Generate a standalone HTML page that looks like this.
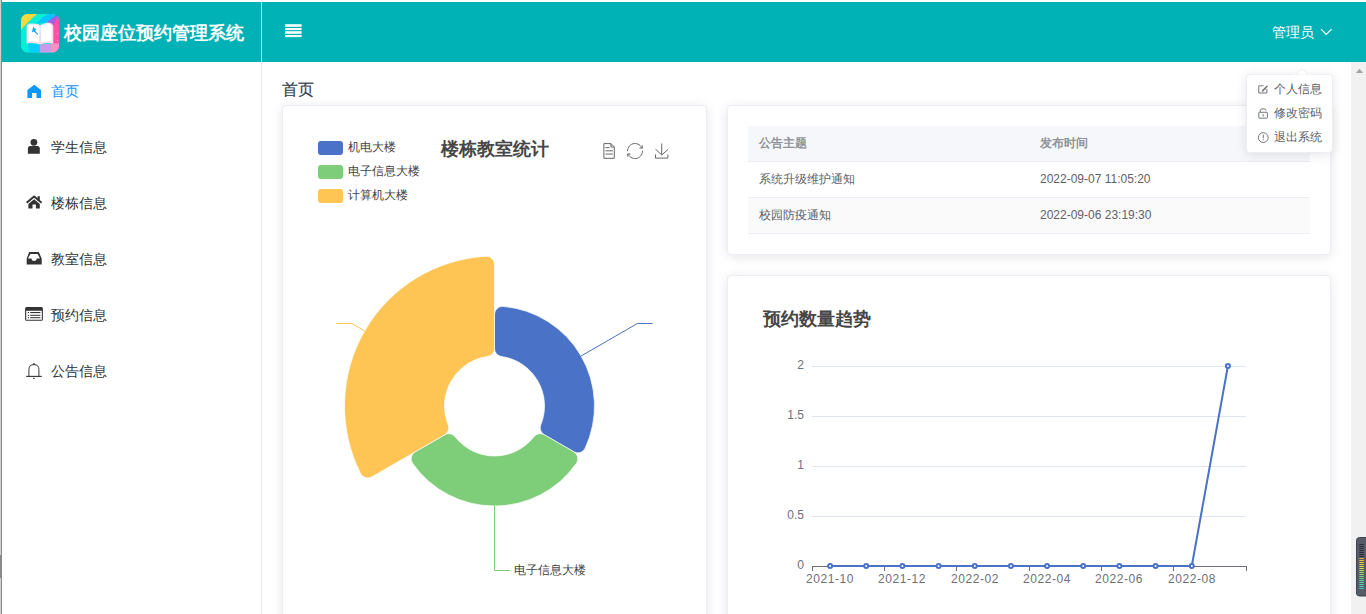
<!DOCTYPE html>
<html><head><meta charset="utf-8">
<style>
*{box-sizing:border-box;margin:0;padding:0}
html,body{width:1366px;height:614px;overflow:hidden;background:#fff;font-family:"Liberation Sans",sans-serif;position:relative}
.abs{position:absolute}
#topline{left:0;top:0;width:1366px;height:2px;background:#fff}
#leftline{left:0;top:0;width:2px;height:614px;background:#8a8a8a;border-left:1px solid #cfcfcf}
#header{left:2px;top:2px;width:1364px;height:60px;background:#00b2b5}
#hdiv{left:261px;top:2px;width:1px;height:60px;background:#dcdcdc}
#title{left:63.5px;top:21px;font-size:18px;font-weight:bold;color:#fff;line-height:24px;white-space:nowrap}
#sidebar{left:2px;top:62px;width:260px;height:552px;background:#fff;border-right:1px solid #e6e6e6}
.mi{position:absolute;left:51px;font-size:14px;color:#303133;line-height:20px;white-space:nowrap}
.ic{position:absolute}
#scroll{left:1351px;top:62px;width:15px;height:552px;background:#f1f1f1}
.card{position:absolute;background:#fff;border:1px solid #ebeef5;border-radius:4px;box-shadow:0 2px 12px 0 rgba(0,0,0,.1)}
.lg{position:absolute;font-size:12px;color:#444;line-height:14px;white-space:nowrap}
.sw{position:absolute;width:25px;height:14px;border-radius:3px;margin-top:1px}
table{border-collapse:collapse}
.th,.td{position:absolute;font-size:12px;line-height:16px;white-space:nowrap}
.th{color:#909399;font-weight:bold}
.td{color:#606266}
.ax{position:absolute;font-size:12px;color:#6e7079;line-height:14px;white-space:nowrap;letter-spacing:0.55px}
</style></head><body>
<div class="abs" id="topline"></div>
<div class="abs" id="header"></div>
<div class="abs" id="hdiv"></div>
<div class="abs" id="leftline"></div>
<!-- logo -->
<svg class="abs" style="left:21px;top:13.5px" width="38" height="39" viewBox="0 0 38 39">
  <defs><clipPath id="lc"><rect x="0" y="0" width="38" height="38.5" rx="6.5"/></clipPath></defs>
  <g clip-path="url(#lc)">
    <rect width="38" height="39" fill="#06eed6"/>
    <path d="M0 0H16Q7.6 7.2 0 15.5Z" fill="#ffd83c"/>
    <path d="M27 0H38V14L31.2 11L26.2 8.6L15.4 9.7Q21 3 27 0Z" fill="#06c4fc"/>
    <path d="M34.4 0H38V14L31.2 11L26.2 8.6Q30 4.5 34.4 1.5Z" fill="#a95ce6"/>
    <path d="M36.8 3.9L38 3V39H32V11Z" fill="#ff4fa6"/>
    <path d="M7 29.4L8.4 39H18.9V30.4Z" fill="#06cdfc"/>
    <path d="M18.9 30.4V39H30.1L29.4 29.4Z" fill="#c99ae8"/>
    <path d="M29.4 29.4L30.1 39H38V29Z" fill="#ff8fc6"/>
    <path d="M5.6 11.8Q6.5 9.4 9.25 9.4L15.4 9.7Q17.5 10 19 11.2V30.4Q12 28.5 5.6 29.4Z" fill="#ffdde9"/>
    <path d="M32.3 11.8Q31 8.8 28.3 8.8L26.8 8.6Q22 9.6 19 11.2V30.4Q26 28.5 32.3 29.4Z" fill="#ffdde9"/>
    <path d="M7.6 11.8Q8.2 10.4 10 10.4L15.2 10.7Q17 11 18.4 12V28.4Q12 27 7.6 27.5Z" fill="#fff"/>
    <path d="M30.6 11.8Q30 9.9 28 9.9L26.8 9.7Q22.5 10.6 19.6 12V28.4Q26 27 30.6 27.5Z" fill="#fff"/>
    <rect x="18.6" y="11.5" width="1" height="9" fill="#bfeaff"/>
    <rect x="18.6" y="20.5" width="1" height="9.5" fill="#e2cdf5"/>
    <path d="M12.2 12.6L13.4 14.6L15.6 14.8L14.2 16.4L14.6 18.6L12.6 17.6L10.8 18.4L11.4 16.2Z" fill="#18a4f4"/>
    <path d="M13.8 16.8L17.2 20L16.4 20.8L13 17.6Z" fill="#18a4f4"/>
    <circle cx="36.6" cy="19.3" r="0.5" fill="#ffd0e8"/>
    <circle cx="36.6" cy="26.6" r="0.5" fill="#ffd0e8"/>
  </g>
</svg>
<div class="abs" style="left:0;top:555px;width:1px;height:23px;background:#8a8a8a"></div>
<div class="abs" id="title">校园座位预约管理系统</div>
<!-- hamburger -->
<svg class="abs" style="left:0;top:0" width="320" height="62">
  <rect x="285" y="24.2" width="16.6" height="2.6" fill="#fff"/>
  <rect x="285" y="28" width="16.6" height="2.1" fill="#fff"/>
  <rect x="285" y="31.2" width="16.6" height="2.6" fill="#fff"/>
  <rect x="285" y="35" width="16.6" height="2.1" fill="#fff"/>
</svg>
<div class="abs" style="left:1272px;top:23px;font-size:14px;color:#fff;line-height:18px;white-space:nowrap">管理员</div>
<svg class="abs" style="left:1319px;top:26px" width="14" height="12" viewBox="0 0 14 12">
  <path d="M2 3.2L7.3 8.5L12.6 3.2" stroke="#fff" stroke-width="1.2" fill="none"/>
</svg>

<!-- sidebar -->
<div class="abs" id="sidebar">
</div>
<div class="mi" style="top:81px;color:#1890ff">首页</div>
<div class="mi" style="top:137px">学生信息</div>
<div class="mi" style="top:193px">楼栋信息</div>
<div class="mi" style="top:249px">教室信息</div>
<div class="mi" style="top:305px">预约信息</div>
<div class="mi" style="top:361px">公告信息</div>


<!-- sidebar icons -->
<svg class="abs" style="left:0;top:0" width="60" height="400">
  <path d="M34.2 84.7L41 90V98H36.5V93H32V98H27.4V90Z" fill="#0b99ff"/>
  <circle cx="33.9" cy="142.3" r="3.4" fill="#333"/>
  <path d="M27.9 153.7V148.5Q27.9 146 30.4 146H37.3Q39.8 146 39.8 148.5V153.7Z" fill="#333"/>
  <!-- fa-home -->
  <path d="M26.6 202.8L34.1 196.6L41.6 202.8" fill="none" stroke="#333" stroke-width="1.9" stroke-linejoin="miter"/>
  <rect x="37.5" y="196.2" width="2.3" height="4.5" fill="#333"/>
  <path d="M28.4 203.9L34.1 199.2L39.8 203.9V208.4H35.9V204.6H32.5V208.4H28.4Z" fill="#333"/>
  <!-- fa-inbox -->
  <path d="M29.2 252H38.8L41.7 258.5V264.6H26.7V258.5Z M30.4 254L27.9 258.5H31.2Q32 261 34.1 261Q36.2 261 37 258.5H40L37.6 254Z" fill="#333" fill-rule="evenodd"/>
  <!-- fa-list-alt -->
  <path d="M26.6 306.9H41.4Q42.9 306.9 42.9 308.4V319.25Q42.9 320.75 41.4 320.75H26.6Q25.1 320.75 25.1 319.25V308.4Q25.1 306.9 26.6 306.9Z M26.2 310.8V319.7H41.8V310.8Z" fill="#333" fill-rule="evenodd"/>
  <rect x="27.8" y="312" width="1.2" height="1.1" fill="#333"/>
  <rect x="27.8" y="314.8" width="1.2" height="1.1" fill="#333"/>
  <rect x="27.8" y="317.1" width="1.2" height="1.1" fill="#333"/>
  <rect x="30.2" y="312" width="10.2" height="1.1" fill="#333"/>
  <rect x="30.2" y="314.8" width="10.2" height="1.1" fill="#444"/>
  <rect x="30.2" y="317.1" width="10.2" height="1.1" fill="#444"/>
  <!-- bell -->
  <path d="M28.9 376.4V369.5Q28.9 364.6 33.9 364.6Q38.9 364.6 38.9 369.5V376.4" fill="none" stroke="#333" stroke-width="1"/>
  <path d="M26.2 376.4H41.8" stroke="#333" stroke-width="1.1"/>
  <circle cx="33.9" cy="363.9" r="0.9" fill="#333"/>
  <rect x="33" y="377.8" width="1.8" height="1" fill="#333"/>
</svg>

<!-- main title -->
<div class="abs" style="left:282px;top:79px;font-size:16px;color:#34404e;line-height:22px;white-space:nowrap;-webkit-text-stroke:0.2px #34404e">首页</div>

<!-- cards -->
<div class="card" style="left:282px;top:105px;width:425px;height:530px"></div>
<div class="card" style="left:727px;top:105px;width:604px;height:150px"></div>
<div class="card" style="left:727px;top:275px;width:604px;height:360px"></div>


<!-- pie card content -->
<div class="sw" style="left:318px;top:140px;background:#4a72c6"></div>
<div class="sw" style="left:318px;top:164px;background:#7ecd78"></div>
<div class="sw" style="left:318px;top:188px;background:#fec555"></div>
<div class="lg" style="left:348px;top:140px">机电大楼</div>
<div class="lg" style="left:348px;top:164px">电子信息大楼</div>
<div class="lg" style="left:348px;top:188px">计算机大楼</div>
<div class="abs" style="left:441px;top:137px;font-size:18px;font-weight:bold;color:#464646;line-height:24px;white-space:nowrap">楼栋教室统计</div>
<svg class="abs" style="left:0;top:0;overflow:visible" width="1366" height="614">
<path d="M494.50 348.55 L494.50 314.35 A8.00 8.00 0 0 1 503.20 306.38 A100.00 100.00 0 0 1 585.12 448.28 A8.00 8.00 0 0 1 573.87 451.83 L544.25 434.72 A8.00 8.00 0 0 1 540.84 424.79 A50.00 50.00 0 0 0 501.40 356.48 A8.00 8.00 0 0 1 494.50 348.55 Z" fill="#4a72c6" stroke="#fff" stroke-width="0.7"/>
<path d="M544.25 434.72 L573.87 451.83 A8.00 8.00 0 0 1 576.43 463.34 A100.00 100.00 0 0 1 412.57 463.34 A8.00 8.00 0 0 1 415.13 451.83 L444.75 434.72 A8.00 8.00 0 0 1 455.06 436.73 A50.00 50.00 0 0 0 533.94 436.73 A8.00 8.00 0 0 1 544.25 434.72 Z" fill="#7ecd78" stroke="#fff" stroke-width="0.7"/>
<path d="M444.75 434.72 L371.72 476.89 A8.00 8.00 0 0 1 360.58 473.56 A150.00 150.00 0 0 1 486.05 256.24 A8.00 8.00 0 0 1 494.50 264.23 L494.50 348.55 A8.00 8.00 0 0 1 487.60 356.48 A50.00 50.00 0 0 0 448.16 424.79 A8.00 8.00 0 0 1 444.75 434.72 Z" fill="#fec555" stroke="#fff" stroke-width="0.7"/>
<polyline points="581.1,356 637.4,323.5 652.5,323.5" fill="none" stroke="#4a72c6" stroke-width="1"/>
<polyline points="364.6,331 352,323.5 336.5,323.5" fill="none" stroke="#fec555" stroke-width="1"/>
<polyline points="494.5,506 494.5,570.5 510,570.5" fill="none" stroke="#7ecd78" stroke-width="1"/>
</svg>
<div class="lg" style="left:514px;top:563px">电子信息大楼</div>
<!-- toolbox -->
<svg class="abs" style="left:0;top:0" width="700" height="200">
 <g transform="translate(600.88,143.08) scale(0.2625)" fill="none" stroke="#666">
  <path vector-effect="non-scaling-stroke" d="M17.5,17.3H33 M45.4,29.5h-28 M11.5,2v56H51V14.8L38.4,2H11.5z M38.4,2.2v12.7H51 M45.4,41.7h-28"/>
 </g>
 <g transform="translate(626.96,142.99) scale(0.268)" fill="none" stroke="#666">
  <path vector-effect="non-scaling-stroke" d="M47,18.9h9.8V8.7 M56.3,20.1 C52.1,9,40.5,0.6,26.8,2.1C12.6,3.7,1.6,16.2,2.1,30.6 M13,41.1H3.1v10.2 M3.7,39.9c4.2,11.1,15.8,19.5,29.5,18 c14.2-1.6,25.2-14.1,24.7-28.5"/>
 </g>
 <g transform="translate(654.34,143.5) scale(0.2517)" fill="none" stroke="#666">
  <path vector-effect="non-scaling-stroke" d="M4.7,22.9L29.3,45.5L54.7,23.4M4.6,43.6L4.6,58L53.8,58L53.8,43.6M29.2,45.1L29.2,0"/>
 </g>
</svg>

<!-- table card -->
<div class="abs" style="left:748px;top:126px;width:562px;height:36px;background:#f5f7fa;border-bottom:1px solid #ebeef5"></div>
<div class="abs" style="left:748px;top:162px;width:562px;height:36px;background:#fff;border-bottom:1px solid #ebeef5"></div>
<div class="abs" style="left:748px;top:198px;width:562px;height:36px;background:#fafafa;border-bottom:1px solid #ebeef5"></div>
<div class="th" style="left:759px;top:135px">公告主题</div>
<div class="th" style="left:1040px;top:135px">发布时间</div>
<div class="td" style="left:759px;top:171px">系统升级维护通知</div>
<div class="td" style="left:1040px;top:171px">2022-09-07 11:05:20</div>
<div class="td" style="left:759px;top:207px">校园防疫通知</div>
<div class="td" style="left:1040px;top:207px">2022-09-06 23:19:30</div>

<!-- line chart -->
<div class="abs" style="left:763px;top:307px;font-size:18px;font-weight:bold;color:#464646;line-height:24px;white-space:nowrap">预约数量趋势</div>
<svg class="abs" style="left:0;top:0;overflow:visible" width="1366" height="614">
<line x1="812" y1="366.5" x2="1246" y2="366.5" stroke="#e0e6f1" stroke-width="1"/>
<line x1="812" y1="416.5" x2="1246" y2="416.5" stroke="#e0e6f1" stroke-width="1"/>
<line x1="812" y1="466.5" x2="1246" y2="466.5" stroke="#e0e6f1" stroke-width="1"/>
<line x1="812" y1="516.5" x2="1246" y2="516.5" stroke="#e0e6f1" stroke-width="1"/>
<line x1="812" y1="566.5" x2="1246" y2="566.5" stroke="#6e7079" stroke-width="1"/>
<line x1="812.5" y1="566" x2="812.5" y2="571" stroke="#6e7079" stroke-width="1"/>
<line x1="884.5" y1="566" x2="884.5" y2="571" stroke="#6e7079" stroke-width="1"/>
<line x1="956.5" y1="566" x2="956.5" y2="571" stroke="#6e7079" stroke-width="1"/>
<line x1="1029.5" y1="566" x2="1029.5" y2="571" stroke="#6e7079" stroke-width="1"/>
<line x1="1101.5" y1="566" x2="1101.5" y2="571" stroke="#6e7079" stroke-width="1"/>
<line x1="1173.5" y1="566" x2="1173.5" y2="571" stroke="#6e7079" stroke-width="1"/>
<line x1="1246.5" y1="566" x2="1246.5" y2="571" stroke="#6e7079" stroke-width="1"/>
<polyline points="830.1,566.0 866.2,566.0 902.4,566.0 938.6,566.0 974.8,566.0 1010.9,566.0 1047.1,566.0 1083.2,566.0 1119.4,566.0 1155.6,566.0 1191.8,566.0 1227.9,366.0" fill="none" stroke="#4a72c6" stroke-width="2" stroke-linejoin="round"/>
<circle cx="830.1" cy="566.0" r="2" fill="#fff" stroke="#4a72c6" stroke-width="2"/>
<circle cx="866.2" cy="566.0" r="2" fill="#fff" stroke="#4a72c6" stroke-width="2"/>
<circle cx="902.4" cy="566.0" r="2" fill="#fff" stroke="#4a72c6" stroke-width="2"/>
<circle cx="938.6" cy="566.0" r="2" fill="#fff" stroke="#4a72c6" stroke-width="2"/>
<circle cx="974.8" cy="566.0" r="2" fill="#fff" stroke="#4a72c6" stroke-width="2"/>
<circle cx="1010.9" cy="566.0" r="2" fill="#fff" stroke="#4a72c6" stroke-width="2"/>
<circle cx="1047.1" cy="566.0" r="2" fill="#fff" stroke="#4a72c6" stroke-width="2"/>
<circle cx="1083.2" cy="566.0" r="2" fill="#fff" stroke="#4a72c6" stroke-width="2"/>
<circle cx="1119.4" cy="566.0" r="2" fill="#fff" stroke="#4a72c6" stroke-width="2"/>
<circle cx="1155.6" cy="566.0" r="2" fill="#fff" stroke="#4a72c6" stroke-width="2"/>
<circle cx="1191.8" cy="566.0" r="2" fill="#fff" stroke="#4a72c6" stroke-width="2"/>
<circle cx="1227.9" cy="366.0" r="2" fill="#fff" stroke="#4a72c6" stroke-width="2"/>
</svg>
<div class="ax" style="letter-spacing:0;right:562px;top:358px">2</div>
<div class="ax" style="letter-spacing:0;right:562px;top:408px">1.5</div>
<div class="ax" style="letter-spacing:0;right:562px;top:458px">1</div>
<div class="ax" style="letter-spacing:0;right:562px;top:508px">0.5</div>
<div class="ax" style="letter-spacing:0;right:562px;top:558px">0</div>
<div class="ax" style="left:790px;top:572px;width:80px;text-align:center">2021-10</div>
<div class="ax" style="left:862px;top:572px;width:80px;text-align:center">2021-12</div>
<div class="ax" style="left:935px;top:572px;width:80px;text-align:center">2022-02</div>
<div class="ax" style="left:1007px;top:572px;width:80px;text-align:center">2022-04</div>
<div class="ax" style="left:1079px;top:572px;width:80px;text-align:center">2022-06</div>
<div class="ax" style="left:1152px;top:572px;width:80px;text-align:center">2022-08</div>


<!-- dropdown -->
<div class="abs" style="left:1246px;top:74px;width:87px;height:79px;background:#fff;border:1px solid #ebeef5;border-radius:4px;box-shadow:0 2px 12px 0 rgba(0,0,0,.1)"></div>
<svg class="abs" style="left:1290px;top:66px" width="24" height="12" viewBox="0 0 24 12">
  <path d="M6 8.6L12 2.8L18 8.6Z" fill="#fff" stroke="#ebeef5" stroke-width="1"/>
  <rect x="3" y="8.6" width="18" height="3" fill="#fff"/>
</svg>
<svg class="abs" style="left:0;top:0;overflow:visible" width="1366" height="160">
  <g fill="none" stroke="#73767d" stroke-width="1">
   <path d="M1263.5 85.8H1258.8V93H1266.9V89"/>
   <rect x="1258.8" y="112.3" width="8.6" height="5.9" rx="0.6"/>
   <path d="M1260.2 112.3V110.9Q1260.2 108.7 1263.1 108.7Q1265.9 108.7 1266.2 110.6"/>
   <circle cx="1263.3" cy="137.6" r="4.9"/>
  </g>
  <path d="M1267.4 86L1262.6 90.8" stroke="#73767d" stroke-width="1.7" fill="none"/>
  <path d="M1261.9 91.9L1262.1 90.2L1263.4 91.5Z" fill="#73767d"/>
  <rect x="1262.6" y="114" width="1" height="2.6" fill="#73767d"/>
  <rect x="1262.8" y="134.6" width="1" height="3.8" fill="#73767d"/>
  <rect x="1262.8" y="139.4" width="1" height="1" fill="#73767d"/>
</svg>
<div class="lg" style="left:1274px;top:82px;color:#606266">个人信息</div>
<div class="lg" style="left:1274px;top:106px;color:#606266">修改密码</div>
<div class="lg" style="left:1274px;top:130px;color:#606266">退出系统</div>

<!-- scrollbar -->
<div class="abs" id="scroll"></div>
<svg class="abs" style="left:1351px;top:62px" width="15" height="20"><path d="M4.9 11.1L8.5 6.7L12.1 11.1Z" fill="#a3a3a3"/></svg>
<svg class="abs" style="left:1355px;top:536px" width="11" height="61" viewBox="0 0 11 61">
  <rect x="1.5" y="1.5" width="14" height="58.5" rx="3" fill="#575b67" stroke="#40444e" stroke-width="1"/>
  <rect x="4.3" y="8.0" width="4.5" height="1" fill="#2a2d35"/>
<rect x="4.3" y="10.0" width="4.5" height="1" fill="#2a2d35"/>
<rect x="4.3" y="12.0" width="4.5" height="1" fill="#2a2d35"/>
<rect x="4.3" y="14.0" width="4.5" height="1" fill="#2a2d35"/>
<rect x="4.3" y="16.0" width="4.5" height="1" fill="#2a2d35"/>
<rect x="4.3" y="18.0" width="4.5" height="1" fill="#2a2d35"/>
<rect x="4.3" y="20.0" width="4.5" height="1" fill="#2a2d35"/>
<rect x="4.3" y="22.0" width="4.5" height="1" fill="#f0a838"/>
<rect x="4.3" y="24.0" width="4.5" height="1" fill="#f2bc3c"/>
<rect x="4.3" y="26.0" width="4.5" height="1" fill="#f0cc40"/>
<rect x="4.3" y="28.0" width="4.5" height="1" fill="#ecd846"/>
<rect x="4.3" y="30.0" width="4.5" height="1" fill="#e4e04c"/>
<rect x="4.3" y="32.0" width="4.5" height="1" fill="#d4e454"/>
<rect x="4.3" y="34.0" width="4.5" height="1" fill="#c0e45c"/>
<rect x="4.3" y="36.0" width="4.5" height="1" fill="#a8e064"/>
<rect x="4.3" y="38.0" width="4.5" height="1" fill="#90dc70"/>
<rect x="4.3" y="40.0" width="4.5" height="1" fill="#7cd880"/>
<rect x="4.3" y="42.0" width="4.5" height="1" fill="#6cd890"/>
<rect x="4.3" y="44.0" width="4.5" height="1" fill="#60d8a4"/>
<rect x="4.3" y="46.0" width="4.5" height="1" fill="#58d8b4"/>
<rect x="4.3" y="48.0" width="4.5" height="1" fill="#50d4bc"/>
<rect x="4.3" y="50.0" width="4.5" height="1" fill="#4cd0c0"/>
<rect x="4.3" y="52.0" width="4.5" height="1" fill="#48ccc4"/>
</svg>

</body></html>
